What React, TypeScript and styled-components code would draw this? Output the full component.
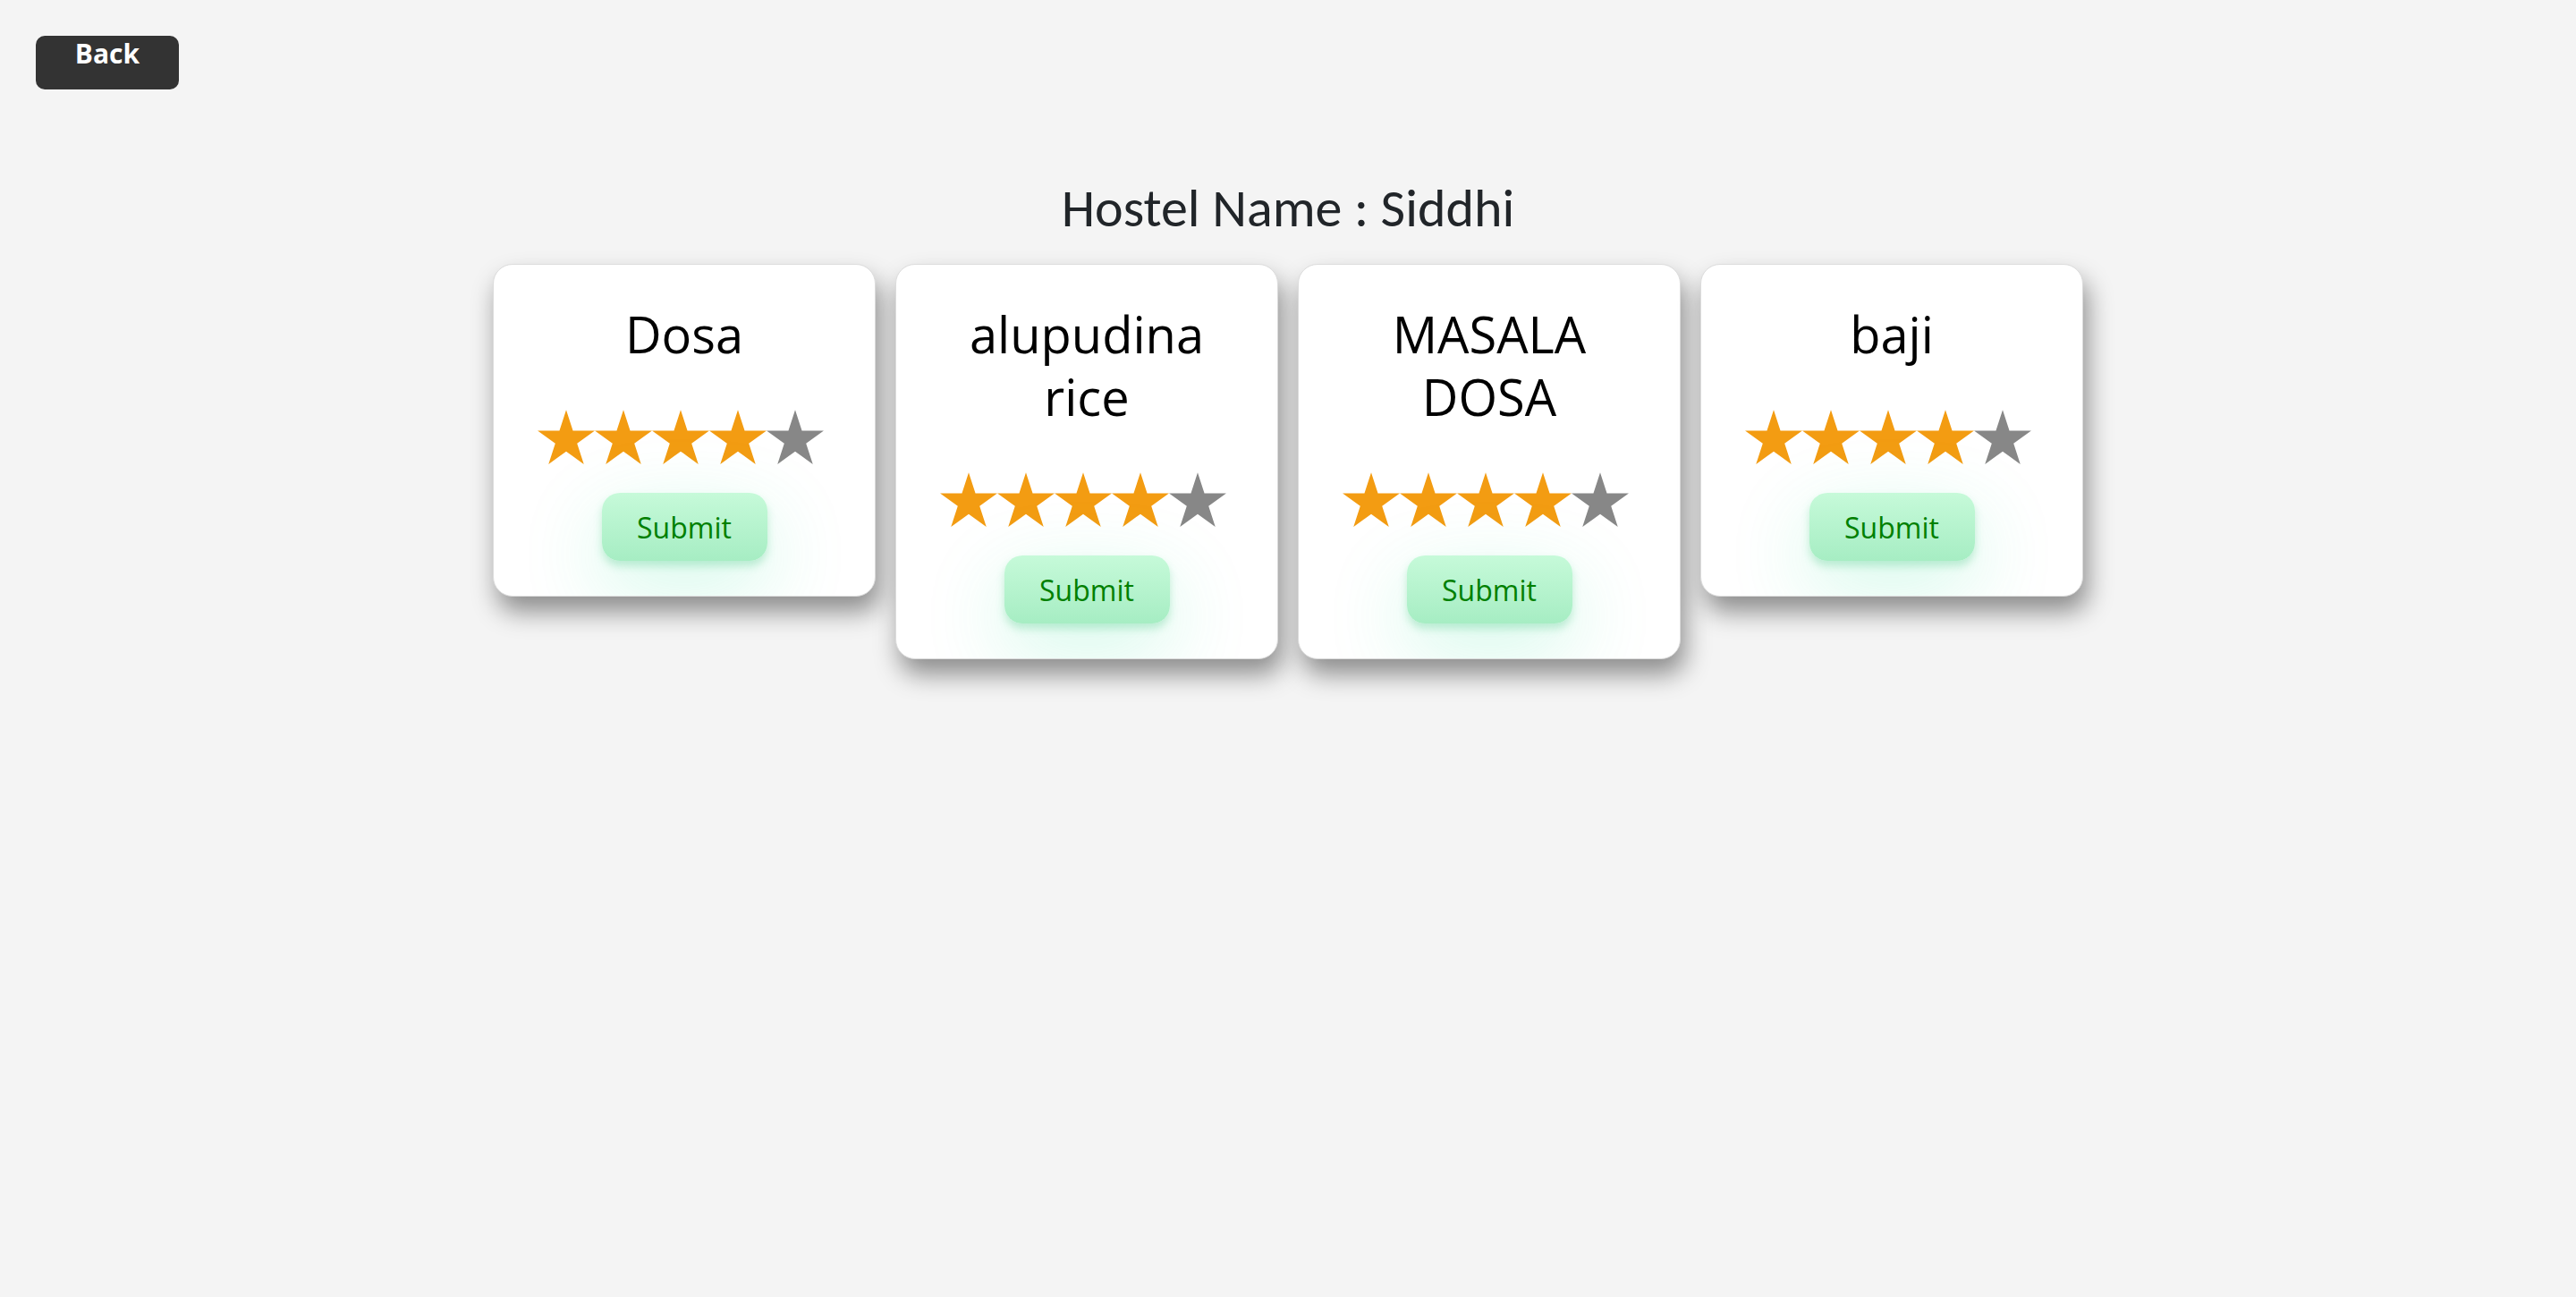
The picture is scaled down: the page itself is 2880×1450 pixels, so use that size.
import React from "react";
import styled, { createGlobalStyle } from "styled-components";

const GlobalStyle = createGlobalStyle`
  html, body {
    margin: 0;
    padding: 0;
    background: #f4f4f4;
  }
  * { box-sizing: border-box; }
`;

const Page = styled.div`
  min-height: 100vh;
  padding: 40px;
  background: #f4f4f4;
  font-family: "Comic Sans MS", "Open Sans", sans-serif;
`;

const BackButton = styled.button`
  display: flex;
  align-items: flex-start;
  justify-content: center;
  width: 160px;
  height: 60px;
  padding: 0;
  border: none;
  border-radius: 10px;
  background: #333333;
  color: #ffffff;
  font-family: "Comic Sans MS", "Open Sans", sans-serif;
  font-weight: 700;
  font-size: 30px;
  line-height: 1.362;
  cursor: pointer;
`;

const Heading = styled.h2`
  margin: 97px 0 26px 0;
  text-align: center;
  font-family: Calibri, Lato, sans-serif;
  font-weight: 400;
  font-size: 60px;
  line-height: 1.2;
  color: #212529;
`;

const CardRow = styled.div`
  display: flex;
  justify-content: center;
  align-items: flex-start;
  gap: 22px;
`;

const Card = styled.div`
  width: 428px;
  display: flex;
  flex-direction: column;
  align-items: center;
  padding: 42px 40px 39px 40px;
  background: #ffffff;
  border: 1px solid #dcdcdc;
  border-radius: 22px;
  overflow: hidden;
  box-shadow: 5px 17px 28px rgba(0, 0, 0, 0.42);
`;

const Title = styled.h3`
  margin: 0 0 50px 0;
  width: 100%;
  text-align: center;
  font-family: "Comic Sans MS", "Open Sans", sans-serif;
  font-weight: 400;
  font-size: 56px;
  line-height: 70px;
  color: #000000;
`;

const Stars = styled.div`
  display: flex;
  margin: 0 9px 32px 0;
`;

const StarSvg = styled.svg<{ $on: boolean }>`
  display: block;
  width: 64px;
  height: 61px;
  fill: ${(p) => (p.$on ? "#f39c12" : "#878787")};
`;

const SubmitButton = styled.button`
  width: 185px;
  height: 76px;
  border: none;
  border-radius: 20px;
  background: linear-gradient(180deg, #c6fad9 0%, #a6edc3 100%);
  color: #008000;
  font-family: "Comic Sans MS", "Open Sans", sans-serif;
  font-size: 32px;
  cursor: pointer;
  box-shadow: 0 6px 10px rgba(70, 200, 130, 0.3),
    0 30px 90px rgba(46, 229, 157, 0.22);
`;

const Star: React.FC<{ on: boolean }> = ({ on }) => {
  const cx = 32;
  const R = 33.6;
  const r = R * 0.382;
  const cy = R + 0.2;
  const pts: string[] = [];
  for (let i = 0; i < 10; i++) {
    const rad = i % 2 === 0 ? R : r;
    const a = (-90 + i * 36) * (Math.PI / 180);
    pts.push(`${(cx + rad * Math.cos(a)).toFixed(2)},${(cy + rad * Math.sin(a)).toFixed(2)}`);
  }
  return (
    <StarSvg $on={on} viewBox="0 0 64 61">
      <polygon points={pts.join(" ")} />
    </StarSvg>
  );
};

const items = [
  { name: "Dosa", rating: 4 },
  { name: "alupudina rice", rating: 4 },
  { name: "MASALA DOSA", rating: 4 },
  { name: "baji", rating: 4 },
];

export default function App() {
  return (
    <>
      <GlobalStyle />
      <Page>
        <BackButton>Back</BackButton>
        <Heading>Hostel Name : Siddhi</Heading>
        <CardRow>
          {items.map((it) => (
            <Card key={it.name}>
              <Title>{it.name}</Title>
              <Stars>
                {[1, 2, 3, 4, 5].map((n) => (
                  <Star key={n} on={n <= it.rating} />
                ))}
              </Stars>
              <SubmitButton>Submit</SubmitButton>
            </Card>
          ))}
        </CardRow>
      </Page>
    </>
  );
}
